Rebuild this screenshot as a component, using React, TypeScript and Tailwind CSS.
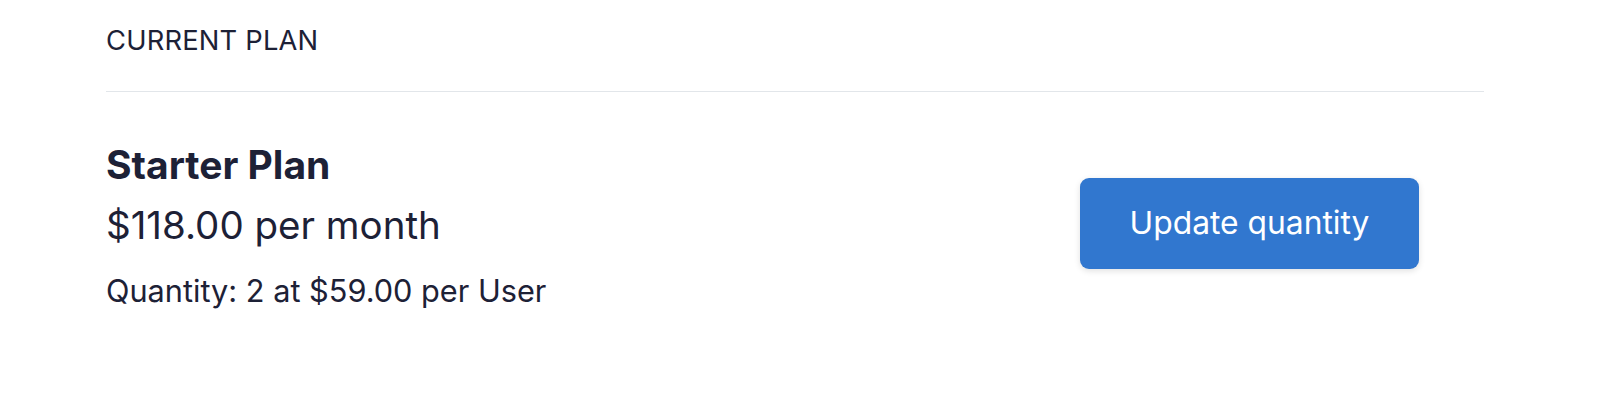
export default function App() {
  return (
    <div className="min-h-screen bg-white font-['Inter','Liberation_Sans',sans-serif] text-[#1d2136]">
      <div className="w-[1378px] ml-[106px] pt-[25px]">
        <h2 className="text-[27.3px] leading-[32px] uppercase tracking-[0.2px]">Current plan</h2>
        <div className="mt-[34px] border-t border-[#e2e6ea]" />
        <div className="flex items-center justify-between pr-[65px] pt-[51px]">
          <div>
            <h3 className="text-[39px] leading-[44px] font-bold">Starter Plan</h3>
            <p className="mt-[16px] text-[38.5px] leading-[44px]">$118.00 per month</p>
            <p className="mt-[26px] text-[30.7px] leading-[36px]">Quantity: 2 at $59.00 per User</p>
          </div>
          <button className="mb-[6px] w-[339px] h-[91px] rounded-[9px] bg-[#3177cf] text-white text-[31.8px] shadow-[0_2px_6px_rgba(0,0,0,0.12)]">
            Update quantity
          </button>
        </div>
      </div>
    </div>
  );
}
